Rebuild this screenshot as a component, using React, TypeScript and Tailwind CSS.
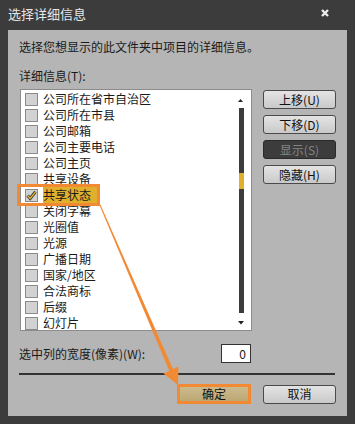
import React from "react";

const items = [
  "公司所在省市自治区",
  "公司所在市县",
  "公司邮箱",
  "公司主要电话",
  "公司主页",
  "共享设备",
  "共享状态",
  "关闭字幕",
  "光圈值",
  "光源",
  "广播日期",
  "国家/地区",
  "合法商标",
  "后缀",
  "幻灯片",
];

const font = { fontFamily: '"Noto Sans CJK SC", "Liberation Sans", sans-serif' };

function Btn({ label, disabled }: { label: string; disabled?: boolean }) {
  return (
    <div
      className={
        disabled
          ? "w-[73px] h-[19px] rounded-[3px] border border-[#2a2a2a] bg-[#3c3c3c] text-[#858585] flex items-center justify-center text-[12px] leading-none"
          : "w-[73px] h-[19px] rounded-[3px] border border-[#4a4a4a] bg-gradient-to-b from-[#e4e4e4] to-[#c9c9c9] text-[#111] flex items-center justify-center text-[12px] leading-none"
      }
    >
      {label}
    </div>
  );
}

function CheckBox({ checked }: { checked?: boolean }) {
  return (
    <div className="w-[13px] h-[13px] border border-[#8a8a8a] bg-[#d2d2d2] flex items-center justify-center shrink-0">
      {checked && (
        <svg width="11" height="11" viewBox="0 0 11 11">
          <path d="M1.5 5.5 L4.2 8.5 L9.5 1.8" fill="none" stroke="#333" strokeWidth="3" />
          <path d="M1.5 5.5 L4.2 8.5 L9.5 1.8" fill="none" stroke="#e8b830" strokeWidth="1.3" />
        </svg>
      )}
    </div>
  );
}

export default function App() {
  return (
    <div className="relative w-[355px] h-[424px] bg-[#3c3c3c] overflow-hidden" style={font}>
      <div className="h-[30px] flex items-start justify-between pl-[8px] pr-[26px]">
        <div className="mt-[5px] text-[13px] leading-[18px] text-[#e6e6e6]">选择详细信息</div>
        <svg className="mt-[9px]" width="8" height="8" viewBox="0 0 8 8">
          <path d="M1 1 L7 7 M7 1 L1 7" stroke="#ececec" strokeWidth="2.4" />
        </svg>
      </div>
      <div className="ml-[8px] w-[339px] h-[386px] bg-[#b5b5b5] pl-[11px] pt-[9px] text-[#1a1a1a] text-[12px]">
        <div className="leading-[16px]">选择您想显示的此文件夹中项目的详细信息。</div>
        <div className="leading-[16px] mt-[13px]">详细信息(T):</div>
        <div className="flex mt-[5px]">
          <div className="relative ml-[1px] w-[232px] h-[242px] border border-[#8c8c8c] bg-white pt-[1px]">
            {items.map((t) => {
              const sel = t === "共享状态";
              return (
                <div key={t} className="h-[16px] flex items-center pl-[4px] gap-[5px]">
                  <CheckBox checked={sel} />
                  <span
                    className={
                      sel
                        ? "bg-[#e0b02c] h-[16px] pr-[2px] leading-[16px] w-[55px]"
                        : "leading-[16px]"
                    }
                  >
                    {t}
                  </span>
                </div>
              );
            })}
            <div className="absolute left-[217px] top-[9px] w-[5px] h-[4px] flex justify-center">
              <svg width="5" height="4" viewBox="0 0 5 4">
                <path d="M2.5 0 L5 3 L0 3 Z" fill="#222" />
              </svg>
            </div>
            <div className="absolute left-[218px] top-[18px] w-[5px] h-[205px] bg-[#3c3c3c]">
              <div className="mt-[65px] h-[16px] bg-[#e0b02c]" />
            </div>
            <div className="absolute left-[217px] top-[231px]">
              <svg width="6" height="4" viewBox="0 0 6 4">
                <path d="M0 0 L6 0 L3 3.5 Z" fill="#222" />
              </svg>
            </div>
          </div>
          <div className="ml-[11px] mt-[1px] flex flex-col gap-[6px]">
            <Btn label="上移(U)" />
            <Btn label="下移(D)" />
            <Btn label="显示(S)" disabled />
            <Btn label="隐藏(H)" />
          </div>
        </div>
        <div className="flex items-center mt-[13px] h-[19px]">
          <div className="w-[202px] leading-[16px]">选中列的宽度(像素)(W):</div>
          <div className="w-[30px] h-[19px] border border-[#333] bg-white text-right pr-[4px] leading-[17px]">0</div>
        </div>
        <div className="mt-[10px] w-[316px] h-[2px] bg-[#333]" />
        <div className="flex mt-[9px] ml-[158px] items-center">
          <div className="w-[74px] h-[20px] border-[3px] border-[#f28a34] bg-gradient-to-b from-[#cbbb8e] to-[#bda874] flex items-center justify-center text-[12px] leading-none text-[#111]">
            确定
          </div>
          <div className="ml-[12px]">
            <Btn label="取消" />
          </div>
        </div>
      </div>

      {/* annotation box */}
      <div className="absolute left-[17px] top-[184px] w-[83px] h-[22px] border-[3px] border-[#f28a34]" />
      {/* annotation arrow */}
      <svg className="absolute left-0 top-0" width="355" height="424" viewBox="0 0 355 424">
        <polygon points="99.5,205.2 100.5,204.8 173.6,370.4 169.8,372" fill="#f28a34" />
        <polygon points="178.5,366.5 163.5,373.5 178,385" fill="#f28a34" />
      </svg>
    </div>
  );
}
